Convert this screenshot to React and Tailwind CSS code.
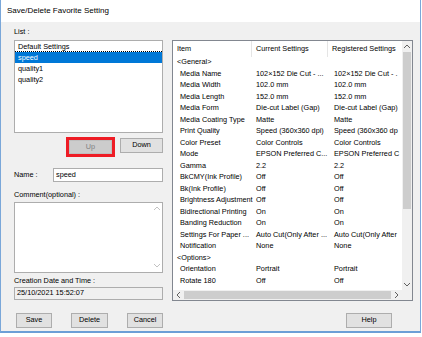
import React from "react";

// Save/Delete Favorite Setting dialog (Windows-style)

const rows = [
  ["<General>", "", "", true],
  ["Media Name", "102×152 Die Cut - ...", "102×152 Die Cut - ."],
  ["Media Width", "102.0 mm", "102.0 mm"],
  ["Media Length", "152.0 mm", "152.0 mm"],
  ["Media Form", "Die-cut Label (Gap)", "Die-cut Label (Gap)"],
  ["Media Coating Type", "Matte", "Matte"],
  ["Print Quality", "Speed (360x360 dpi)", "Speed (360x360 dp"],
  ["Color Preset", "Color Controls", "Color Controls"],
  ["Mode", "EPSON Preferred C...", "EPSON Preferred C"],
  ["Gamma", "2.2", "2.2"],
  ["BkCMY(Ink Profile)", "Off", "Off"],
  ["Bk(Ink Profile)", "Off", "Off"],
  ["Brightness Adjustment", "Off", "Off"],
  ["Bidirectional Printing", "On", "On"],
  ["Banding Reduction", "On", "On"],
  ["Settings For Paper ...", "Auto Cut(Only After ...", "Auto Cut(Only After"],
  ["Notification", "None", "None"],
  ["<Options>", "", "", true],
  ["Orientation", "Portrait", "Portrait"],
  ["Rotate 180", "Off", "Off"],
];

const Chevron = ({ dir = "up", color = "#606060" }) => {
  const d = {
    up: "M1 5 L4 2 L7 5",
    down: "M1 2 L4 5 L7 2",
    left: "M5 1 L2 4 L5 7",
    right: "M2 1 L5 4 L2 7",
  }[dir];
  return (
    <svg width="8" height="8" viewBox="0 0 8 8">
      <path d={d} fill="none" stroke={color} strokeWidth="1" />
    </svg>
  );
};

const Btn = ({ children, className = "" }) => (
  <div
    className={`h-[15px] flex items-center justify-center bg-[#e1e1e1] border border-[#adadad] text-[7.3px] text-black ${className}`}
  >
    {children}
  </div>
);

const App = () => {
  return (
    <div className="w-[422px] h-[337px] bg-white font-['Liberation_Sans',Arial,sans-serif] text-black">
      <div className="w-[421px] h-[333px] flex flex-col border-l border-r border-[#7aa7d9] border-b-2 border-b-[#6c9fd6]">
        {/* title bar */}
        <div className="h-[22px] shrink-0 bg-white flex items-center pl-[6px] text-[8px] leading-none">
          Save/Delete Favorite Setting
        </div>

        {/* body */}
        <div className="flex-1 bg-[#f0f0f0] flex pl-[13px] pt-[5px] gap-[9px]">
          {/* left column */}
          <div className="w-[149px] flex flex-col text-[7.3px]">
            <div className="h-[10px] leading-[10px]">List :</div>
            <div className="mt-[3px] h-[93px] bg-white border border-[#adadad] flex flex-col">
              <div className="h-[11px] leading-[11px] pl-[3px] border-b border-dotted border-black">
                Default Settings
              </div>
              <div className="h-[11px] leading-[11px] pl-[3px] bg-[#0078d7] text-white">speed</div>
              <div className="h-[11px] leading-[11px] pl-[3px]">quality1</div>
              <div className="h-[11px] leading-[11px] pl-[3px]">quality2</div>
            </div>

            <div className="mt-[4px] h-[20px] flex justify-end items-start gap-[5px]">
              <div className="w-[49px] h-[20px] border-[3px] border-[#ee1c25]">
                <div className="w-full h-full flex items-center justify-center bg-[#cccccc] border border-[#bfbfbf] text-[#838383]">
                  Up
                </div>
              </div>
              <Btn className="w-[43px] mt-[1px]">Down</Btn>
            </div>

            <div className="mt-[11px] h-[14px] flex items-center justify-between">
              <span>Name :</span>
              <div className="w-[110px] h-[14px] bg-white border border-[#adadad] flex items-center pl-[2px]">
                speed
              </div>
            </div>

            <div className="mt-[8px] h-[10px] leading-[10px]">Comment(optional) :</div>
            <div className="mt-[2px] h-[71px] bg-white border border-[#adadad] flex justify-end">
              <div className="w-[10px] flex flex-col justify-between items-center py-[2px]">
                <Chevron dir="up" color="#c2c2c2" />
                <Chevron dir="down" color="#c2c2c2" />
              </div>
            </div>

            <div className="mt-[3px] h-[10px] leading-[10px]">Creation Date and Time :</div>
            <div className="mt-[1px] h-[13px] bg-[#f0f0f0] border border-[#adadad] flex items-center pl-[2px]">
              25/10/2021 15:52:07
            </div>

            <div className="mt-[13px] pl-[2px] flex justify-between">
              <Btn className="w-[36px]">Save</Btn>
              <Btn className="w-[37px]">Delete</Btn>
              <Btn className="w-[36px]">Cancel</Btn>
            </div>
          </div>

          {/* right column */}
          <div className="w-[241px] flex flex-col text-[7.3px]">
            <div className="mt-[13px] h-[261px] bg-white border border-[#828790] flex flex-col">
              <div className="flex-1 flex min-h-0">
                <div className="flex-1 overflow-hidden">
                  <div className="h-[16px] flex items-center whitespace-nowrap">
                    <div className="w-[79px] h-full flex items-center pl-[4px] border-r border-[#e5e5e5]">Item</div>
                    <div className="w-[76px] h-full flex items-center pl-[4px] border-r border-[#e5e5e5]">
                      Current Settings
                    </div>
                    <div className="h-full flex items-center pl-[4px]">Registered Settings</div>
                  </div>
                  {rows.map(([item, cur, reg, group], i) => (
                    <div key={i} className="h-[11.5px] flex items-center whitespace-nowrap">
                      {group ? (
                        <div className="pl-[4px]">{item}</div>
                      ) : (
                        <>
                          <div className="w-[79px] shrink-0 pl-[7px]">{item}</div>
                          <div className="w-[76px] shrink-0 pl-[4px]">{cur}</div>
                          <div className="shrink-0 pl-[6px]">{reg}</div>
                        </>
                      )}
                    </div>
                  ))}
                </div>
                {/* vertical scrollbar */}
                <div className="w-[10px] bg-[#f0f0f0] flex flex-col">
                  <div className="h-[11px] flex items-center justify-center">
                    <Chevron dir="up" />
                  </div>
                  <div className="h-[157px] bg-[#cdcdcd] mx-[1px]" />
                  <div className="flex-1" />
                  <div className="h-[11px] flex items-center justify-center">
                    <Chevron dir="down" />
                  </div>
                </div>
              </div>
              {/* horizontal scrollbar */}
              <div className="h-[10px] flex bg-[#f0f0f0]">
                <div className="w-[11px] flex items-center justify-center">
                  <Chevron dir="left" />
                </div>
                <div className="flex-1 bg-[#cdcdcd] my-[1px]" />
                <div className="w-[11px] flex items-center justify-center">
                  <Chevron dir="right" />
                </div>
                <div className="w-[10px] bg-[#f0f0f0]" />
              </div>
            </div>

            <div className="mt-[12px] flex justify-end pr-[21px]">
              <Btn className="w-[46px]">Help</Btn>
            </div>
          </div>
        </div>
      </div>
    </div>
  );
};

export default App;
